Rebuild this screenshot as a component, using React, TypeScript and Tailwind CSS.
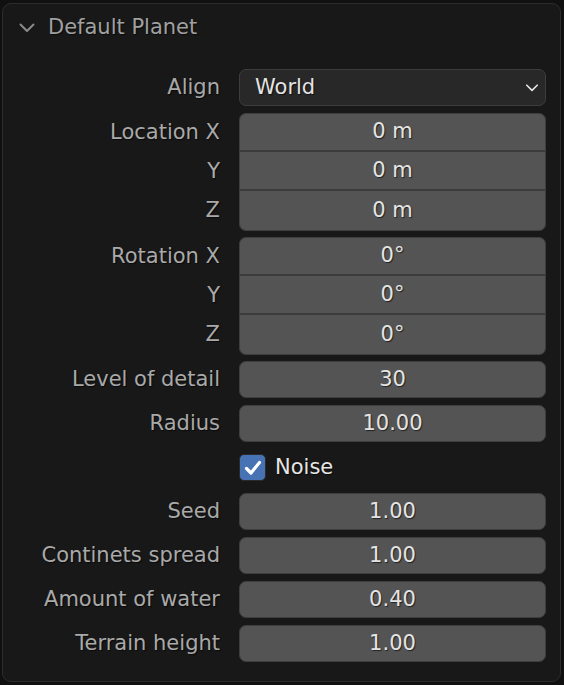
import React from "react";

const FONT = "font-['DejaVu_Sans',sans-serif]";
const SHADOW = "[text-shadow:1px_1px_1px_rgba(0,0,0,0.6)]";

type Field = { label: string; value: string };

const Chevron: React.FC<{ className?: string }> = ({ className }) => (
  <svg viewBox="0 0 16 10" className={className} fill="none">
    <path d="M1.5 1.5 L8 8 L14.5 1.5" stroke="currentColor" strokeWidth="2" strokeLinecap="round" strokeLinejoin="round" />
  </svg>
);

const Label: React.FC<{ text: string }> = ({ text }) => (
  <div className={`w-[217px] text-right text-[21px] text-[#a9a9a9] ${SHADOW}`}>{text}</div>
);

const NumberRow: React.FC<Field> = ({ label, value }) => (
  <div className="flex h-[37px] items-center gap-[19px]">
    <Label text={label} />
    <div className={`flex h-[37px] w-[307px] items-center justify-center rounded-[7px] border border-[#3e3e3e] bg-[#545454] text-[21px] text-[#e4e4e4] ${SHADOW}`}>
      {value}
    </div>
  </div>
);

const Group: React.FC<{ rows: Field[] }> = ({ rows }) => (
  <div className="flex flex-col">
    {rows.map((r, i) => {
      const first = i === 0;
      const last = i === rows.length - 1;
      return (
        <div key={i} className="flex items-center gap-[19px]">
          <Label text={r.label} />
          <div
            className={[
              "flex w-[307px] items-center justify-center border-x border-[#3e3e3e] bg-[#545454] text-[21px] text-[#e4e4e4]",
              SHADOW,
              first ? "h-[39px] rounded-t-[7px] border-t" : "",
              last ? "h-[40px] rounded-b-[7px] border-b" : "",
              !last ? "border-b-2 border-b-[#3b3b3b]" : "",
              !first && !last ? "h-[39px]" : "",
            ].join(" ")}
          >
            {r.value}
          </div>
        </div>
      );
    })}
  </div>
);

export default function App() {
  return (
    <div className={`h-[685px] w-[564px] overflow-hidden bg-[#101010] pl-[2px] pt-[3px] ${FONT}`}>
      <div className="h-[679px] w-[559px] rounded-[9px] border border-[#2c2c2c] bg-[#181818]">
        <div className="flex h-[48px] items-center pl-[15px]">
          <Chevron className="h-[10px] w-[18px] text-[#8a8a8a]" />
          <span className={`ml-[12px] text-[21px] text-[#a0a0a0] ${SHADOW}`}>Default Planet</span>
        </div>

        <div className="mt-[17px] flex flex-col">
          <div className="flex h-[37px] items-center gap-[19px]">
            <Label text="Align" />
            <div className={`flex h-[37px] w-[307px] items-center justify-between rounded-[7px] border border-[#3d3d3d] bg-[#282828] pl-[15px] pr-[6px] text-[21px] text-[#e4e4e4] ${SHADOW}`}>
              <span>World</span>
              <Chevron className="h-[8px] w-[14px] text-[#e8e8e8]" />
            </div>
          </div>

          <div className="mt-[7px]">
            <Group
              rows={[
                { label: "Location X", value: "0 m" },
                { label: "Y", value: "0 m" },
                { label: "Z", value: "0 m" },
              ]}
            />
          </div>

          <div className="mt-[6px]">
            <Group
              rows={[
                { label: "Rotation X", value: "0°" },
                { label: "Y", value: "0°" },
                { label: "Z", value: "0°" },
              ]}
            />
          </div>

          <div className="mt-[6px] flex flex-col gap-[7px]">
            <NumberRow label="Level of detail" value="30" />
            <NumberRow label="Radius" value="10.00" />

            <div className="flex h-[37px] items-center gap-[19px]">
              <div className="w-[217px]" />
              <div className="flex items-center gap-[9px]">
                <div className="flex h-[27px] w-[27px] items-center justify-center rounded-[5px] border border-[#2a2a2a] bg-[#4772b3]">
                  <svg viewBox="0 0 20 20" className="h-[20px] w-[20px]" fill="none">
                    <path d="M3.5 10.5 L8 15 L16.5 4.5" stroke="#ffffff" strokeWidth="3.2" strokeLinecap="round" strokeLinejoin="round" />
                  </svg>
                </div>
                <span className={`text-[21px] text-[#e6e6e6] ${SHADOW}`}>Noise</span>
              </div>
            </div>

            <NumberRow label="Seed" value="1.00" />
            <NumberRow label="Continets spread" value="1.00" />
            <NumberRow label="Amount of water" value="0.40" />
            <NumberRow label="Terrain height" value="1.00" />
          </div>
        </div>
      </div>
    </div>
  );
}
